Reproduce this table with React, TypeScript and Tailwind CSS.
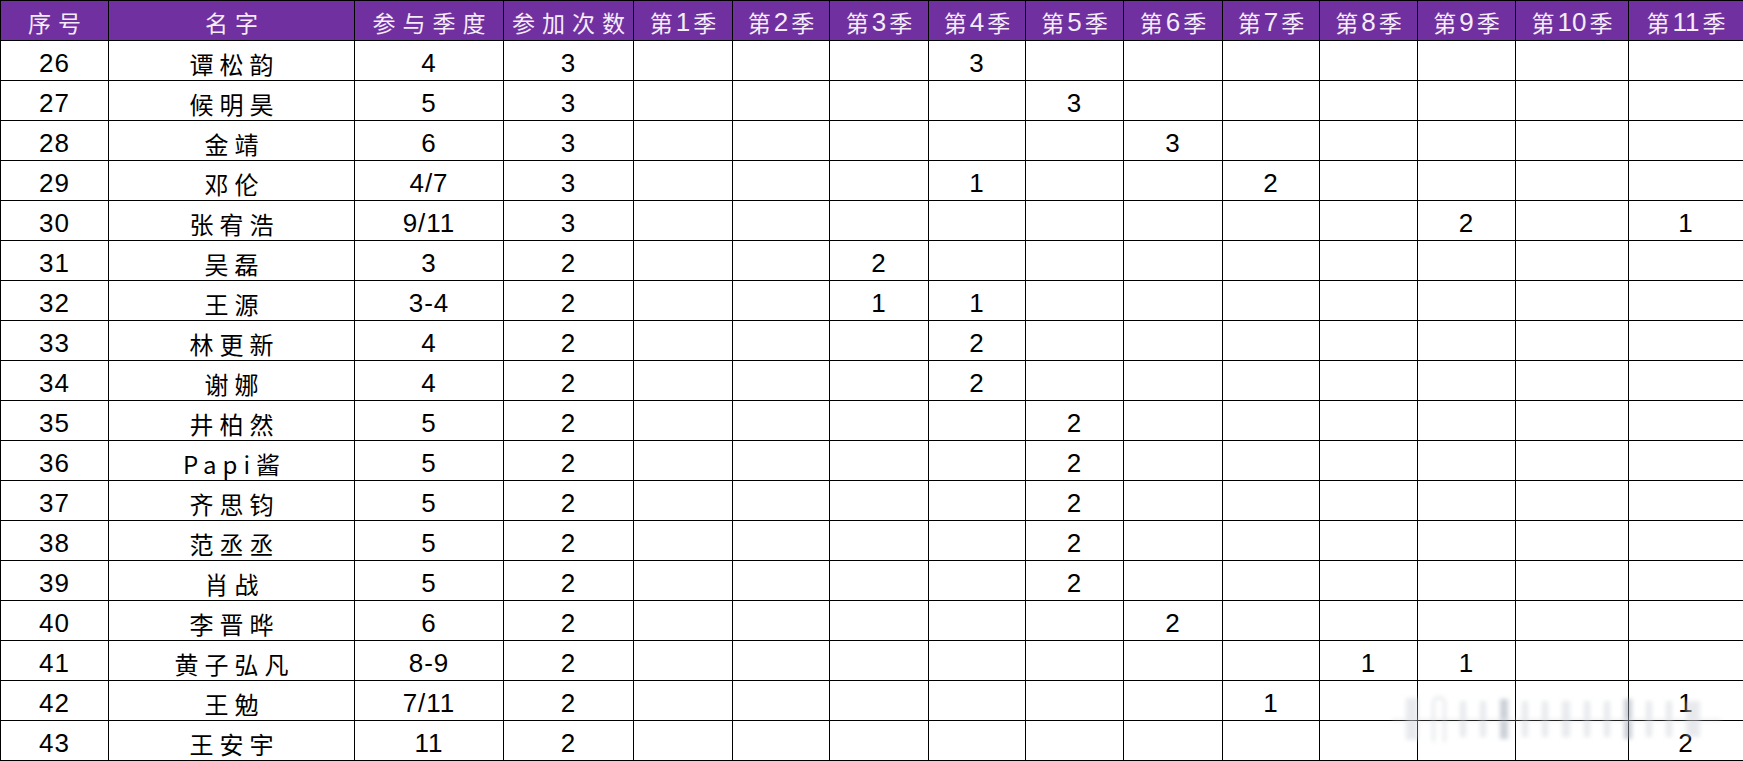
const colWidths = [
  "w-[108px]",
  "w-[246px]",
  "w-[149px]",
  "w-[130px]",
  "w-[99px]",
  "w-[97px]",
  "w-[99px]",
  "w-[97px]",
  "w-[98px]",
  "w-[99px]",
  "w-[97px]",
  "w-[98px]",
  "w-[98px]",
  "w-[113px]",
  "w-[115px]",
];

type Row = {
  id: number;
  name: string;
  seasons: string;
  count: number;
  marks: Record<number, number>;
};

const rows: Row[] = [
  { id: 26, name: "谭松韵", seasons: "4", count: 3, marks: { 4: 3 } },
  { id: 27, name: "候明昊", seasons: "5", count: 3, marks: { 5: 3 } },
  { id: 28, name: "金靖", seasons: "6", count: 3, marks: { 6: 3 } },
  { id: 29, name: "邓伦", seasons: "4/7", count: 3, marks: { 4: 1, 7: 2 } },
  { id: 30, name: "张宥浩", seasons: "9/11", count: 3, marks: { 9: 2, 11: 1 } },
  { id: 31, name: "吴磊", seasons: "3", count: 2, marks: { 3: 2 } },
  { id: 32, name: "王源", seasons: "3-4", count: 2, marks: { 3: 1, 4: 1 } },
  { id: 33, name: "林更新", seasons: "4", count: 2, marks: { 4: 2 } },
  { id: 34, name: "谢娜", seasons: "4", count: 2, marks: { 4: 2 } },
  { id: 35, name: "井柏然", seasons: "5", count: 2, marks: { 5: 2 } },
  { id: 36, name: "Papi酱", seasons: "5", count: 2, marks: { 5: 2 } },
  { id: 37, name: "齐思钧", seasons: "5", count: 2, marks: { 5: 2 } },
  { id: 38, name: "范丞丞", seasons: "5", count: 2, marks: { 5: 2 } },
  { id: 39, name: "肖战", seasons: "5", count: 2, marks: { 5: 2 } },
  { id: 40, name: "李晋晔", seasons: "6", count: 2, marks: { 6: 2 } },
  { id: 41, name: "黄子弘凡", seasons: "8-9", count: 2, marks: { 8: 1, 9: 1 } },
  { id: 42, name: "王勉", seasons: "7/11", count: 2, marks: { 7: 1, 11: 1 } },
  { id: 43, name: "王安宇", seasons: "11", count: 2, marks: { 11: 2 } },
];

const seasonNums = [1, 2, 3, 4, 5, 6, 7, 8, 9, 10, 11];

const cjk = "font-['Noto_Sans_CJK_SC',sans-serif]";
const num = "font-['Liberation_Sans','Noto_Sans_CJK_SC',sans-serif]";

const HeadText = ({ text }: { text: string }) => (
  <div
    className={`flex h-[39px] items-center justify-center pt-[4px] pl-[7px] text-[23px] tracking-[7px] ${cjk}`}
  >
    {text}
  </div>
);

const SeasonHead = ({ n }: { n: number }) => (
  <div
    className={`flex h-[39px] items-center justify-center gap-[3px] pt-[4px] text-[23px] ${cjk}`}
  >
    <span>第</span>
    <span className={`text-[26px] ${num}`}>{n}</span>
    <span>季</span>
  </div>
);

const Cell = ({ children, cn }: { children?: React.ReactNode; cn?: boolean }) => (
  <td className="h-[39px] border border-black p-0">
    <div
      className={`flex h-[39px] items-center justify-center pt-[6px] text-black ${
        cn ? `pl-[6px] text-[24px] tracking-[6px] ${cjk}` : `text-[26px] tracking-[1px] ${num}`
      }`}
    >
      {children}
    </div>
  </td>
);

// blurred weibo-style watermark over the bottom right cells
const Watermark = () => (
  <div className="pointer-events-none absolute left-[1390px] top-[690px] h-[58px] w-[345px] opacity-50 blur-[2px]">
    <div className="absolute left-[2px] right-[14px] top-[29px] h-[2px] bg-gray-300" />
    <div className="flex h-full items-center gap-[14px] pl-[16px]">
      <div className="h-[42px] w-[12px] bg-gray-300" />
      <div className="h-[46px] w-[14px] rounded-t-full border-[3px] border-b-0 border-gray-300" />
      <div className="h-[36px] w-[6px] bg-gray-300" />
      <div className="h-[36px] w-[6px] bg-gray-300" />
      <div className="h-[40px] w-[8px] bg-gray-400" />
      <div className="h-[36px] w-[6px] bg-gray-300" />
      <div className="h-[36px] w-[6px] bg-gray-300" />
      <div className="h-[36px] w-[8px] bg-gray-300" />
      <div className="h-[36px] w-[6px] bg-gray-300" />
      <div className="h-[36px] w-[6px] bg-gray-300" />
      <div className="h-[40px] w-[8px] bg-gray-400" />
      <div className="h-[36px] w-[6px] bg-gray-300" />
      <div className="h-[36px] w-[6px] bg-gray-300" />
      <div className="h-[36px] w-[14px] bg-gray-300" />
    </div>
  </div>
);

export default function App() {
  return (
    <div className="relative h-[761px] w-[1743px] overflow-hidden bg-white">
      <table className="w-[1743px] table-fixed border-collapse">
        <colgroup>
          {colWidths.map((w, i) => (
            <col key={i} className={w} />
          ))}
        </colgroup>
        <thead>
          <tr className="bg-[#7030a0] text-[#f4ecf8]">
            <th className="h-[39px] border border-black p-0 font-normal">
              <HeadText text="序号" />
            </th>
            <th className="h-[39px] border border-black p-0 font-normal">
              <HeadText text="名字" />
            </th>
            <th className="h-[39px] border border-black p-0 font-normal">
              <HeadText text="参与季度" />
            </th>
            <th className="h-[39px] border border-black p-0 font-normal">
              <HeadText text="参加次数" />
            </th>
            {seasonNums.map((n) => (
              <th key={n} className="h-[39px] border border-black p-0 font-normal">
                <SeasonHead n={n} />
              </th>
            ))}
          </tr>
        </thead>
        <tbody>
          {rows.map((r) => (
            <tr key={r.id}>
              <Cell>{r.id}</Cell>
              <Cell cn>{r.name}</Cell>
              <Cell>{r.seasons}</Cell>
              <Cell>{r.count}</Cell>
              {seasonNums.map((n) => (
                <Cell key={n}>{r.marks[n] ?? ""}</Cell>
              ))}
            </tr>
          ))}
        </tbody>
      </table>
      <Watermark />
    </div>
  );
}
